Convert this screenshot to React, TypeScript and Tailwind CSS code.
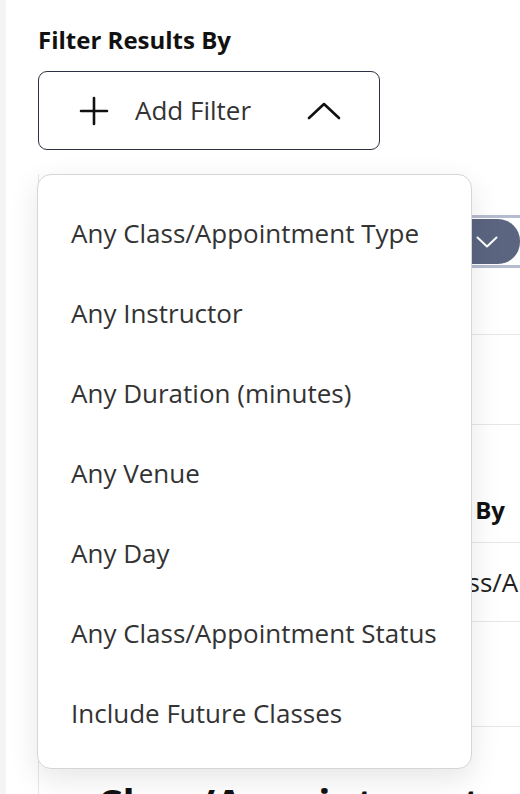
const options = [
    "Any Class/Appointment Type",
    "Any Instructor",
    "Any Duration (minutes)",
    "Any Venue",
    "Any Day",
    "Any Class/Appointment Status",
    "Include Future Classes",
];

export default function App() {
    return (
        <div className="flex h-[794px] w-[520px] overflow-hidden bg-white font-['Open_Sans',sans-serif] text-[#222]">
            <div className="w-[6px] shrink-0 bg-[#f3f4f6]" />
            <div className="relative min-w-0 flex-1 pl-[32px]">
                {/* Header + trigger */}
                <h2 className="mt-[24px] text-[24px] font-bold leading-[32px] text-[#111]">Filter Results By</h2>
                <button className="mt-[15px] flex h-[79px] w-[342px] items-center rounded-[9px] border-[1.5px] border-[#2b3140] pl-[40px] pr-[38px]">
                    <svg width="30" height="30" viewBox="0 0 30 30" className="shrink-0">
                        <path d="M15 2v26M2 15h26" stroke="#111" strokeWidth="2.6" strokeLinecap="round" />
                    </svg>
                    <span className="ml-[26px] text-[26px] text-[#333]">Add Filter</span>
                    <svg width="34" height="18" viewBox="0 0 34 18" className="ml-auto shrink-0">
                        <path d="M2 16L17 2l15 14" fill="none" stroke="#111" strokeWidth="2.6" strokeLinecap="round" strokeLinejoin="round" />
                    </svg>
                </button>

                {/* Underlying page content */}
                <div className="mt-[24px] overflow-hidden border-l border-[#e5e7eb]">
                    <div className="h-[41px]" />
                    <div className="flex h-[53px] items-center justify-end border-y-[3px] border-[#b6bcd0]">
                        <div className="flex h-[45px] w-[220px] items-center justify-end rounded-r-[22px] bg-[#5b6580] pr-[22px]">
                            <svg width="22" height="12" viewBox="0 0 22 12">
                                <path d="M1.5 1.5L11 10.5l9.5-9" fill="none" stroke="#fff" strokeWidth="2" strokeLinecap="round" strokeLinejoin="round" />
                            </svg>
                        </div>
                    </div>
                    <div className="h-[67px] border-b border-[#e5e7eb]" />
                    <div className="h-[90px] border-b border-[#e5e7eb]" />
                    <div className="flex h-[118px] items-end border-b border-[#e5e7eb] pb-[14px]">
                        <h3 className="ml-[273px] whitespace-nowrap text-[24px] font-bold text-[#111]">Filter Results By</h3>
                    </div>
                    <div className="flex h-[79px] items-center border-b border-[#e5e7eb]">
                        <span className="ml-[339px] whitespace-nowrap text-[26px] text-[#222]">Any Class/Appointment Type</span>
                    </div>
                    <div className="h-[105px] border-b border-[#e5e7eb]" />
                    <div className="pl-[58px] pt-[46px]">
                        <span className="whitespace-nowrap text-[40px] font-bold text-[#111]">Class/Appointment</span>
                    </div>
                </div>

                {/* Open dropdown */}
                <div className="absolute left-[31px] top-[174px] w-[435px] rounded-[14px] border border-[#d6d6d6] bg-white pb-[15px] pt-[18px] shadow-[0_10px_30px_rgba(0,0,0,0.10)]">
                    {options.map((o) => (
                        <div key={o} className="flex h-[80px] items-center px-[33px] text-[26px] text-[#333]">
                            {o}
                        </div>
                    ))}
                </div>
            </div>
        </div>
    );
}
